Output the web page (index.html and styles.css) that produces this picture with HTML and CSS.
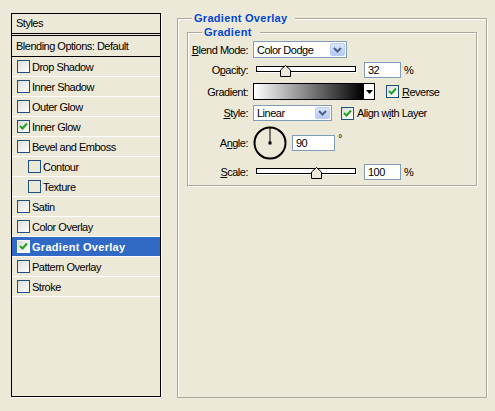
FILE: index.html
```html
<!DOCTYPE html>
<html lang="en">
<head>
    <meta charset="UTF-8">
    <title>Layer Style</title>
    <link rel="stylesheet" href="styles.css">
</head>
<body>
    <div class="dialog">
        <div class="styles-list">
            <div class="list-head">Styles</div>
            <div class="list-blend">Blending Options: Default</div>
            <div class="list-item"><span class="cb"></span>Drop Shadow</div>
            <div class="list-item"><span class="cb"></span>Inner Shadow</div>
            <div class="list-item"><span class="cb"></span>Outer Glow</div>
            <div class="list-item"><span class="cb checked"><svg viewBox="0 0 11 11"><path d="M2 5 L4.5 7.5 L9 2.5"/></svg></span>Inner Glow</div>
            <div class="list-item"><span class="cb"></span>Bevel and Emboss</div>
            <div class="list-item sub"><span class="cb plain"></span>Contour</div>
            <div class="list-item sub"><span class="cb plain"></span>Texture</div>
            <div class="list-item"><span class="cb"></span>Satin</div>
            <div class="list-item"><span class="cb"></span>Color Overlay</div>
            <div class="list-item selected"><span class="cb checked"><svg viewBox="0 0 11 11"><path d="M2 5 L4.5 7.5 L9 2.5"/></svg></span>Gradient Overlay</div>
            <div class="list-item"><span class="cb"></span>Pattern Overlay</div>
            <div class="list-item"><span class="cb"></span>Stroke</div>
        </div>

        <fieldset class="group outer">
            <legend>Gradient Overlay</legend>
            <fieldset class="group inner">
                <legend>Gradient</legend>

                <div class="row row-blend">
                    <span class="lbl"><u>B</u>lend Mode:</span>
                    <div class="combo combo-blend">
                        <span class="combo-text">Color Dodge</span>
                        <span class="combo-btn"><svg viewBox="0 0 9 6"><path d="M1 1 L4.5 4.5 L8 1"/></svg></span>
                    </div>
                </div>

                <div class="row row-opacity">
                    <span class="lbl">O<u>p</u>acity:</span>
                    <div class="slider">
                        <div class="track"></div>
                        <svg class="thumb" style="left: 27px" viewBox="0 0 11 12"><path d="M5.5 0.5 L10.5 5 L10.5 11.5 L0.5 11.5 L0.5 5 Z"/></svg>
                    </div>
                    <input class="num" type="text" value="32">
                    <span class="unit">%</span>
                </div>

                <div class="row row-gradient">
                    <span class="lbl">Gradient:</span>
                    <div class="grad-preview"></div>
                    <span class="grad-btn"><svg viewBox="0 0 7 4"><path d="M0 0 L7 0 L3.5 4 Z"/></svg></span>
                    <span class="cb big checked reverse-cb"><svg viewBox="0 0 11 11"><path d="M2 5 L4.5 7.5 L9 2.5"/></svg></span>
                    <span class="cb-label"><u>R</u>everse</span>
                </div>

                <div class="row row-style">
                    <span class="lbl"><u>S</u>tyle:</span>
                    <div class="combo combo-style">
                        <span class="combo-text">Linear</span>
                        <span class="combo-btn"><svg viewBox="0 0 9 6"><path d="M1 1 L4.5 4.5 L8 1"/></svg></span>
                    </div>
                    <span class="cb big checked align-cb"><svg viewBox="0 0 11 11"><path d="M2 5 L4.5 7.5 L9 2.5"/></svg></span>
                    <span class="cb-label">Align w<u>i</u>th Layer</span>
                </div>

                <div class="row row-angle">
                    <span class="lbl">A<u>n</u>gle:</span>
                    <svg class="dial" viewBox="0 0 34 34">
                        <circle cx="17" cy="17" r="15.5"/>
                        <line x1="17" y1="17" x2="17" y2="2"/>
                        <rect x="15.5" y="15.5" width="3" height="3"/>
                    </svg>
                    <input class="num angle-num" type="text" value="90">
                    <span class="deg">°</span>
                </div>

                <div class="row row-scale">
                    <span class="lbl"><u>S</u>cale:</span>
                    <div class="slider">
                        <div class="track"></div>
                        <svg class="thumb" style="left: 58px" viewBox="0 0 11 12"><path d="M5.5 0.5 L10.5 5 L10.5 11.5 L0.5 11.5 L0.5 5 Z"/></svg>
                    </div>
                    <input class="num" type="text" value="100">
                    <span class="unit">%</span>
                </div>
            </fieldset>
        </fieldset>
    </div>
</body>
</html>
```

FILE: styles.css
```css
body {
    margin: 0;
    background: #ece9d8;
    font-family: "Liberation Sans", Arial, sans-serif;
    font-size: 11px;
    letter-spacing: -0.5px;
    color: #000;
}
.dialog {
    display: flex;
    align-items: flex-start;
    padding: 13px 0 0 11px;
}

/* styles list on the left */
.styles-list {
    width: 148px;
    height: 382px;
    border: 1px solid #000;
    box-shadow: 1px 1px 0 #fff;
}
.list-head {
    height: 19px;
    line-height: 19px;
    padding-left: 4px;
    border-bottom: 3px double #000;
}
.list-blend {
    height: 20px;
    line-height: 20px;
    padding-left: 4px;
    border-bottom: 1px solid #000;
}
.list-item {
    display: flex;
    align-items: center;
    height: 19px;
    padding-left: 5px;
    border-bottom: 1px solid #fff;
}
.list-item.sub {
    padding-left: 16px;
}
.list-item.selected {
    background: #316ac5;
    color: #fff;
    font-weight: bold;
    letter-spacing: 0.3px;
}

.cb {
    flex: none;
    width: 11px;
    height: 11px;
    margin-right: 2px;
    border: 1px solid #1c5180;
    background: linear-gradient(135deg, #dcdcd7, #fff);
}
.cb.plain {
    background: #ece9d8;
}
.selected .cb {
    background: linear-gradient(135deg, #dcdcd7, #fff);
    border-color: #fff;
}
.cb svg {
    display: block;
    width: 11px;
    height: 11px;
}
.cb path {
    fill: none;
    stroke: #21a121;
    stroke-width: 2;
}
.cb.big {
    width: 11px;
    height: 11px;
}

/* group boxes */
fieldset.group {
    margin: 0;
    border: 1px solid #aca899;
    box-shadow: 1px 1px 0 #fff, inset 1px 1px 0 #fff;
    box-sizing: border-box;
}
fieldset.group legend {
    line-height: 13px;
    color: #0046d5;
    font-weight: bold;
    letter-spacing: 0.3px;
    background: #ece9d8;
    padding: 0 8px 0 2px;
}
.outer {
    margin-left: 16px !important;
    margin-top: -1px !important;
    width: 310px;
    height: 386px;
    padding: 1px 9px 0 9px;
}
.outer > legend {
    margin-left: 5px;
}
.inner {
    width: 290px;
    padding: 2px 0 5px 0;
}
.inner > legend {
    margin-left: 14px;
}

/* form rows */
.row {
    display: flex;
    align-items: center;
}
.lbl {
    flex: none;
    width: 60px;
    margin-right: 5px;
    text-align: right;
}
.row-blend { height: 17px; }
.row-opacity { height: 16px; margin-top: 4px; }
.row-gradient { height: 17px; margin-top: 5px; }
.row-style { height: 16px; margin-top: 5px; }
.row-angle { height: 34px; margin-top: 5px; }
.row-scale { height: 16px; margin-top: 4px; }

.combo {
    display: flex;
    align-items: center;
    justify-content: space-between;
    box-sizing: border-box;
    height: 17px;
    padding: 1px;
    border: 1px solid #7f9db9;
    background: #fff;
}
.combo-blend { width: 94px; }
.combo-style { width: 79px; height: 16px; }
.combo-text {
    padding-left: 2px;
}
.combo-btn {
    display: flex;
    align-items: center;
    justify-content: center;
    width: 15px;
    height: 100%;
    box-sizing: border-box;
    border: 1px solid #b9cdf7;
    border-radius: 2px;
    background: linear-gradient(#dbe6fe, #b5c9f7);
}
.combo-btn svg {
    width: 9px;
    height: 6px;
}
.combo-btn path {
    fill: none;
    stroke: #4d6185;
    stroke-width: 2;
}

.slider {
    position: relative;
    flex: none;
    width: 103px;
    height: 16px;
}
.track {
    position: absolute;
    left: 3px;
    top: 4px;
    width: 100px;
    height: 6px;
    box-sizing: border-box;
    border: 1px solid #000;
    background: #fff;
    box-shadow: 1px 1px 0 #fff;
}
.thumb {
    position: absolute;
    top: 3px;
    width: 11px;
    height: 12px;
}
.thumb path {
    fill: #ece9d8;
    stroke: #000;
    stroke-width: 1;
}

.num {
    box-sizing: border-box;
    width: 37px;
    height: 16px;
    margin: 0 0 0 8px;
    padding: 0 3px;
    border: 1px solid #7f9db9;
    font: inherit;
    letter-spacing: inherit;
    background: #fff;
}
.unit {
    margin-left: 3px;
}

.grad-preview {
    flex: none;
    box-sizing: border-box;
    width: 111px;
    height: 17px;
    border: 1px solid #000;
    background: linear-gradient(to right, #fff, #000);
}
.grad-btn {
    display: flex;
    align-items: center;
    justify-content: center;
    box-sizing: border-box;
    width: 11px;
    height: 17px;
    border: 1px solid #000;
    border-left: none;
    background: #fff;
}
.grad-btn svg {
    width: 7px;
    height: 4px;
}
.reverse-cb {
    margin-left: 11px;
}
.align-cb {
    margin-left: 9px;
}
.cb-label {
    margin-left: 1px;
}

.dial {
    flex: none;
    width: 34px;
    height: 34px;
}
.dial circle {
    fill: none;
    stroke: #000;
    stroke-width: 2;
}
.dial line {
    stroke: #000;
    stroke-width: 1;
}
.angle-num {
    width: 43px;
    margin-left: 5px;
}
.deg {
    align-self: flex-start;
    margin: 6px 0 0 3px;
}
```
